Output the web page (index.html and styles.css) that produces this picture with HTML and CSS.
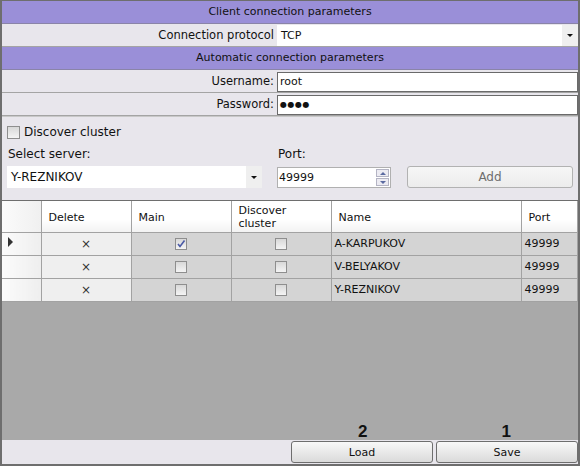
FILE: index.html
```html
<!DOCTYPE html>
<html>
<head>
<title>Connection settings</title>
<link rel="stylesheet" href="styles.css">
</head>
<body>
<div class="window">
  <div class="section-head">Client connection parameters</div>
  <div class="prop-row">
    <div class="prop-label">Connection protocol</div>
    <div class="prop-value">
      <div class="combo">TCP<span class="combo-btn"><span class="tri"></span></span></div>
    </div>
  </div>
  <div class="section-head">Automatic connection parameters</div>
  <div class="prop-row">
    <div class="prop-label">Username:</div>
    <div class="prop-value"><div class="text-box">root</div></div>
  </div>
  <div class="prop-row">
    <div class="prop-label">Password:</div>
    <div class="prop-value"><div class="text-box dots">●●●●</div></div>
  </div>

  <div class="server-panel">
    <div class="check-line"><span class="check"></span>Discover cluster</div>
    <div class="server-fields">
      <div class="field server-field">
        <div class="field-label">Select server:</div>
        <div class="combo server-combo">Y-REZNIKOV<span class="combo-btn"><span class="tri"></span></span></div>
      </div>
      <div class="field port-field">
        <div class="field-label">Port:</div>
        <div class="spin">49999
          <span class="spin-btns"><span class="spin-up"></span><span class="spin-down"></span></span>
        </div>
      </div>
      <div class="field add-field">
        <div class="btn add-btn">Add</div>
      </div>
    </div>
  </div>

  <div class="grid-area">
    <table class="grid">
      <tr class="grid-head">
        <th class="row-head"></th>
        <th class="c-del">Delete</th>
        <th class="c-main">Main</th>
        <th class="c-disc">Discover<br>cluster</th>
        <th class="c-name">Name</th>
        <th class="c-port">Port</th>
      </tr>
      <tr>
        <td class="row-head"><span class="cur"></span></td>
        <td class="del">×</td>
        <td class="mid"><span class="check small checked"><svg viewBox="0 0 10 10" width="10" height="10"><path d="M2 5 L4 7.5 L8.5 1.5" fill="none" stroke="#4a5aa6" stroke-width="1.6"/></svg></span></td>
        <td class="mid"><span class="check small"></span></td>
        <td>A-KARPUKOV</td>
        <td>49999</td>
      </tr>
      <tr>
        <td class="row-head"></td>
        <td class="del">×</td>
        <td class="mid"><span class="check small"></span></td>
        <td class="mid"><span class="check small"></span></td>
        <td>V-BELYAKOV</td>
        <td>49999</td>
      </tr>
      <tr>
        <td class="row-head"></td>
        <td class="del">×</td>
        <td class="mid"><span class="check small"></span></td>
        <td class="mid"><span class="check small"></span></td>
        <td>Y-REZNIKOV</td>
        <td>49999</td>
      </tr>
    </table>
    <div class="marks">
      <span class="mark">2</span>
      <span class="mark">1</span>
    </div>
  </div>

  <div class="footer">
    <div class="btn foot-btn">Load</div>
    <div class="btn foot-btn">Save</div>
  </div>
</div>
</body>
</html>
```

FILE: styles.css
```css
* {
  box-sizing: border-box;
}
body {
  margin: 0;
  font-family: "DejaVu Sans", Verdana, sans-serif;
  font-size: 11px;
  color: #111;
}
.window {
  width: 580px;
  height: 466px;
  border: 2px solid #6e6e6e;
  border-top-width: 1px;
  background: #e8e6ec;
  display: flex;
  flex-direction: column;
}
.section-head {
  height: 23px;
  line-height: 22px;
  background: #9a8fd8;
  text-align: center;
  border-bottom: 1px solid #8a84a8;
}
.prop-row {
  display: flex;
  height: 23px;
  border-bottom: 1px solid #a4a4a4;
}
.prop-label {
  width: 275px;
  padding-right: 3px;
  text-align: right;
  line-height: 22px;
  font-size: 11.5px;
}
.prop-value {
  flex: 1;
  padding: 1px 0 0 0;
}
.combo {
  display: flex;
  align-items: center;
  height: 21px;
  background: #fff;
  padding-left: 4px;
}
.combo-btn {
  margin-left: auto;
  width: 16px;
  height: 100%;
  background: #efefef;
  display: flex;
  align-items: center;
  justify-content: center;
}
.tri {
  width: 0;
  height: 0;
  border-left: 3px solid transparent;
  border-right: 3px solid transparent;
  border-top: 3px solid #111;
}
.text-box {
  height: 20px;
  margin-top: 1px;
  border: 1px solid #6a6a6a;
  background: #fff;
  padding-left: 2px;
  line-height: 18px;
}
.dots {
  font-size: 8px;
  letter-spacing: 0.5px;
}

.server-panel {
  height: 85px;
  border-top: 1px solid #c8c8c8;
  border-bottom: 1px solid #6e6e6e;
  padding: 8px 5px 0 5px;
}
.check-line {
  display: flex;
  align-items: center;
  font-size: 12px;
  height: 14px;
}
.check {
  display: inline-flex;
  align-items: center;
  justify-content: center;
  width: 13px;
  height: 13px;
  border: 1px solid #8e8e8e;
  background: linear-gradient(#d8d8d8, #f4f4f4);
  margin-right: 4px;
}
.check.small {
  width: 12px;
  height: 12px;
  margin: 0;
}
.server-fields {
  display: flex;
  margin-top: 8px;
}
.field-label {
  font-size: 12px;
  height: 19px;
  padding-left: 1px;
}
.server-field {
  width: 270px;
}
.server-combo {
  width: 255px;
  height: 22px;
  font-size: 12px;
}
.port-field {
  width: 130px;
}
.spin {
  width: 114px;
  height: 21px;
  margin-top: 1px;
  border: 1px solid #b0b0b0;
  background: #fff;
  line-height: 19px;
  padding-left: 1px;
  font-size: 11px;
  display: flex;
}
.spin-btns {
  margin-left: auto;
  width: 15px;
  display: flex;
  flex-direction: column;
  padding: 1px;
  gap: 1px;
}
.spin-up, .spin-down {
  flex: 1;
  border: 1px solid #b4b4c4;
  background: #ecebf2;
  display: flex;
  align-items: center;
  justify-content: center;
}
.spin-up::after {
  content: "";
  border-left: 3px solid transparent;
  border-right: 3px solid transparent;
  border-bottom: 3px solid #5a6aa0;
}
.spin-down::after {
  content: "";
  border-left: 3px solid transparent;
  border-right: 3px solid transparent;
  border-top: 3px solid #5a6aa0;
}
.add-field {
  padding-top: 19px;
}
.btn {
  display: flex;
  align-items: center;
  justify-content: center;
  border-radius: 3px;
}
.add-btn {
  width: 166px;
  height: 22px;
  border: 1px solid #b2b2b2;
  background: linear-gradient(#f6f6f6, #ececec);
  color: #6e6e6e;
  font-size: 12px;
}

.grid-area {
  flex: 1;
  background: #a9a9a9;
  display: flex;
  flex-direction: column;
}
.grid {
  border-collapse: collapse;
  width: 575px;
  table-layout: fixed;
}
.grid th, .grid td {
  border: 1px solid #a2a2a2;
  padding: 0 0 0 7px;
  font-weight: normal;
  text-align: left;
  white-space: nowrap;
}
.grid-head th {
  height: 31px;
  background: linear-gradient(#ffffff 60%, #f2f2f2);
  border-top: none;
  line-height: 13px;
  padding-top: 2px;
}
.grid td {
  height: 23px;
  background: #d4d4d4;
  padding-left: 3px;
}
.grid .row-head {
  width: 39px;
  background: linear-gradient(90deg, #fbfbfb, #f0f0f0);
  border-left: none;
  padding: 0 0 0 6px;
}
.grid td.row-head {
  background: linear-gradient(90deg, #fbfbfb, #eeeeee);
}
.c-del { width: 90px; }
.c-main { width: 100px; }
.c-disc { width: 100px; }
.c-name { width: 190px; }
.c-port { width: 56px; }
.grid td.del {
  background: #efefef;
  text-align: center;
  padding: 0;
  font-size: 12px;
  color: #333;
}
.grid td.mid {
  text-align: center;
  padding: 0;
}
.mid .check {
  vertical-align: middle;
}
.cur {
  display: inline-block;
  border-top: 5px solid transparent;
  border-bottom: 5px solid transparent;
  border-left: 5px solid #333;
}
.marks {
  margin-top: auto;
  display: flex;
  padding-left: 289px;
}
.mark {
  width: 144px;
  text-align: center;
  font-family: "Liberation Sans", Arial, sans-serif;
  font-weight: bold;
  font-size: 17px;
  line-height: 17px;
  color: #111;
}

.footer {
  height: 24px;
  display: flex;
  justify-content: flex-end;
  gap: 3px;
  padding-top: 1px;
}
.foot-btn {
  width: 142px;
  height: 22px;
  border: 1px solid #6e6e6e;
  background: linear-gradient(#f8f8f8, #dadada);
  font-size: 11px;
}
```
